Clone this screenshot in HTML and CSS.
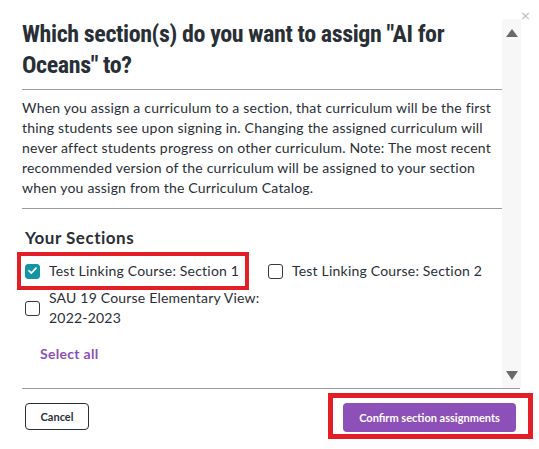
FILE: index.html
```html
<!DOCTYPE html>
<html>
<head>
<meta charset="utf-8">
<link rel="stylesheet" href="styles.css">
</head>
<body>
<div class="modal">
  <span class="close">×</span>
  <div class="body">
    <div class="content">
      <h2 class="title">Which section(s) do you want to assign "AI for Oceans" to?</h2>
      <hr class="rule rule-top">
      <p class="desc">When you assign a curriculum to a section, that curriculum will be the first thing students see upon signing in. Changing the assigned curriculum will never affect students progress on other curriculum. Note: The most recent recommended version of the curriculum will be assigned to your section when you assign from the Curriculum Catalog.</p>
      <hr class="rule rule-mid">
      <div class="sections">
        <h3 class="sections-title">Your Sections</h3>
        <div class="grid">
          <div class="cell">
            <label class="item marked">
              <span class="cb checked"><svg width="15" height="15" viewBox="0 0 15 15"><path d="M4 7.8 L6.4 10 L11 5.2" fill="none" stroke="#fff" stroke-width="1.8" stroke-linecap="round" stroke-linejoin="round"/></svg></span>
              <span class="label-text">Test Linking Course: Section 1</span>
            </label>
          </div>
          <div class="cell">
            <label class="item">
              <span class="cb"></span>
              <span class="label-text">Test Linking Course: Section 2</span>
            </label>
          </div>
          <div class="cell">
            <label class="item">
              <span class="cb"></span>
              <span class="label-text">SAU 19 Course Elementary View: 2022-2023</span>
            </label>
          </div>
        </div>
        <a class="select-all">Select all</a>
      </div>
    </div>
    <div class="scrollbar">
      <span class="arrow up"></span>
      <span class="arrow down"></span>
    </div>
  </div>
  <div class="footer">
    <button class="btn cancel">Cancel</button>
    <button class="btn confirm marked-btn">Confirm section assignments</button>
  </div>
</div>
</body>
</html>
```
FILE: styles.css
```css
* { box-sizing: border-box; }
html, body { margin: 0; padding: 0; background: #fff; }
body { width: 539px; height: 449px; overflow: hidden; color: #292f36; font-family: Lato, "Noto Sans", sans-serif; }

.modal { position: relative; width: 539px; height: 449px; padding-top: 19px; }

.close {
  position: absolute; top: 8px; left: 520px;
  font-family: "DejaVu Sans", sans-serif; font-size: 13px; line-height: 16px;
  color: #b5bec8;
}

.body { display: flex; height: 369px; margin-left: 22px; margin-right: 18px; }
.content { width: 480px; flex: none; }

.title {
  margin: 0; font-family: Roboto, sans-serif; font-weight: 700; font-size: 24px;
  line-height: 31px; font-stretch: 80%; color: #292f36; letter-spacing: -0.4px;
}

.rule { border: 0; border-top: 1px solid #9c9c9c; margin: 0; }
.rule-top { margin-top: 8px; }
.rule-mid { margin-top: 10px; }

.desc { margin: 8px 0 0; font-size: 14px; line-height: 20px; letter-spacing: 0.2px; color: #292f36; }

.sections { padding-left: 3px; }
.sections-title { margin: 18px 0 0; font-size: 17px; line-height: 22px; font-weight: 700; letter-spacing: 0.5px; }

.grid {
  display: grid; grid-template-columns: 235px 1fr; column-gap: 8px; row-gap: 7px;
  margin-top: 12px;
}
.cell { display: flex; }
.item { position: relative; display: inline-flex; align-items: center; gap: 9px; font-size: 14px; line-height: 20px; letter-spacing: 0.2px; }
.label-text { display: block; }
.cb {
  flex: none; width: 15px; height: 15px; border: 1.5px solid #333a40; border-radius: 3px;
  background: #fff; display: flex;
}
.cb.checked { background: #1495a3; border-color: #1495a3; }
.cb svg { margin: -1.5px; }

.marked::after {
  content: ""; position: absolute; left: -8px; top: -9px; right: -10px; bottom: -9px;
  border: 4px solid #e41e26;
}

.select-all {
  display: block; margin: 16px 0 0 15px; font-size: 14px; line-height: 20px;
  font-weight: 700; color: #8c50b8; letter-spacing: 0.3px;
}

.scrollbar {
  width: 19px; flex: none; background: #f7f7f7;
  display: flex; flex-direction: column; justify-content: space-between; align-items: center;
  padding: 10px 0 8px;
}
.arrow { width: 0; height: 0; border-left: 6px solid transparent; border-right: 6px solid transparent; }
.arrow.up { border-bottom: 8px solid #6a6a6a; }
.arrow.down { border-top: 9px solid #6a6a6a; }

.footer {
  margin: 0 19px 0 22px; border-top: 1px solid #9c9c9c;
  padding: 14px 4px 0 3px;
  display: flex; justify-content: space-between; align-items: flex-start;
}
.btn {
  font-family: Lato, sans-serif; font-weight: 700; font-size: 11px; border-radius: 4px; cursor: pointer;
}
.cancel {
  width: 64px; height: 27px; background: #fff; border: 1px solid #292f36; color: #292f36; padding: 0;
}
.confirm {
  position: relative; width: 173px; height: 29px; background: #8c50b8; border: 0; color: #fff; padding: 0;
}
.marked-btn::after {
  content: ""; position: absolute; left: -15px; top: -10px; right: -17px; bottom: -7px;
  border: 5px solid #e41e26;
}
```
